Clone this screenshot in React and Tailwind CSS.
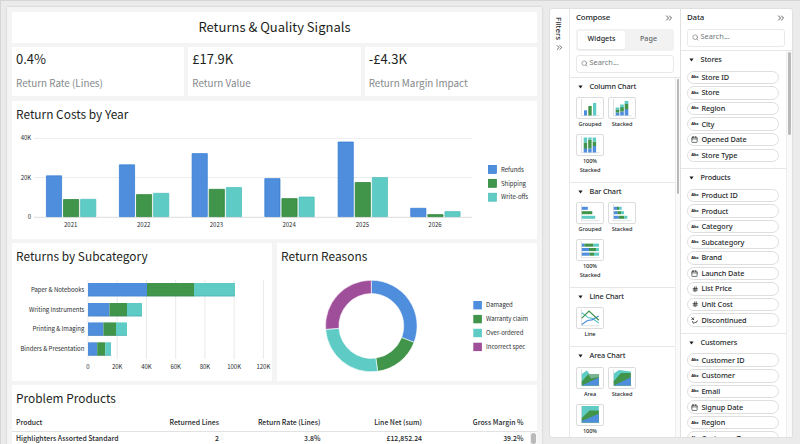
import React, { useState } from 'react';
import { ChevronsRight, Search, Calendar, Hash } from 'lucide-react';

const BLUE = '#4f8edc';
const GREEN = '#41954a';
const TEAL = '#5ecbc5';
const PURPLE = '#9f4f99';

const kpis = [
  { value: '0.4%', label: 'Return Rate (Lines)' },
  { value: '£17.9K', label: 'Return Value' },
  { value: '-£4.3K', label: 'Return Margin Impact' },
];

// x of the group, then the top of each bar
const years = [
  { year: '2021', x: 46, tops: [175.5, 199.2, 199] },
  { year: '2022', x: 119, tops: [164.5, 194.3, 193] },
  { year: '2023', x: 191.7, tops: [153.3, 189, 187.2] },
  { year: '2024', x: 264.4, tops: [178.3, 198.3, 196.7] },
  { year: '2025', x: 337.7, tops: [141.7, 182.2, 177.3] },
  { year: '2026', x: 410.3, tops: [208, 214.3, 211.3] },
];
const barColors = [BLUE, GREEN, TEAL];
const barStrokes = ['#2f78d2', '#258032', '#4bbdb8'];

const subcategories = [
  { name: 'Paper & Notebooks', y: 283, stops: [88, 147, 194, 235] },
  { name: 'Writing Instruments', y: 303, stops: [88, 109.5, 127, 142] },
  { name: 'Printing & Imaging', y: 322.4, stops: [88, 103.4, 116, 127] },
  { name: 'Binders & Presentation', y: 342.3, stops: [88, 97.2, 105.2, 111] },
];
const ticks = ['0', '20K', '40K', '60K', '80K', '100K', '120K'];

const reasons = [
  { name: 'Damaged', from: 0, to: 110.9, color: BLUE },
  { name: 'Warranty claim', from: 110.9, to: 172, color: GREEN },
  { name: 'Over-ordered', from: 172, to: 265.8, color: TEAL },
  { name: 'Incorrect spec', from: 265.8, to: 360, color: PURPLE },
];

const fieldGroups = [
  {
    name: 'Stores',
    fields: [['abc', 'Store ID'], ['abc', 'Store'], ['abc', 'Region'], ['abc', 'City'], ['date', 'Opened Date'], ['abc', 'Store Type']],
  },
  {
    name: 'Products',
    fields: [['abc', 'Product ID'], ['abc', 'Product'], ['abc', 'Category'], ['abc', 'Subcategory'], ['abc', 'Brand'], ['date', 'Launch Date'], ['num', 'List Price'], ['num', 'Unit Cost'], ['bool', 'Discontinued']],
  },
  {
    name: 'Customers',
    fields: [['abc', 'Customer ID'], ['abc', 'Customer'], ['abc', 'Email'], ['date', 'Signup Date'], ['abc', 'Region'], ['abc', 'Customer Type']],
  },
];

function Card({ className = '', children }) {
  return <section className={`bg-white ${className}`}>{children}</section>;
}

function CardTitle({ children }) {
  return <h2 className="pb-[1px] pl-[4px] pt-[3px] text-[11.9px] leading-[20px] text-[#1c1f21]">{children}</h2>;
}

function ReturnCosts() {
  return (
    <svg className="block" width="525" height="114" viewBox="12 125 525 114" fontSize="6" fill="#2a2d30">
      <path d="M34 138.4H472M34 177.5H472" stroke="#ededed" />
      <path d="M34 217.3H472" stroke="#dcdcdc" />
      {['40K', '20K', '0'].map((t, i) => (
        <text key={t} x="31.2" y={[140.3, 179.5, 219][i]} textAnchor="end">{t}</text>
      ))}
      {years.map(({ year, x, tops }) => (
        <g key={year}>
          {tops.map((top, i) => (
            <path
              key={i}
              d={`M${x + 0.4 + i * 17.1} 216.6V${top + 0.3}h15.2V216.6z`}
              fill={barColors[i]}
              stroke={barStrokes[i]}
              strokeWidth="0.7"
            />
          ))}
          <text x={x + 24.7} y="227" textAnchor="middle">{year}</text>
        </g>
      ))}
      {['Refunds', 'Shipping', 'Write-offs'].map((t, i) => (
        <g key={t}>
          <rect x="488.4" y={165.4 + i * 13.9} width="8" height="8" fill={barColors[i]} stroke={barStrokes[i]} strokeWidth="0.7" />
          <text x="501" y={171.6 + i * 13.9}>{t}</text>
        </g>
      ))}
    </svg>
  );
}

function SubcategoryBars() {
  return (
    <svg className="block" width="260" height="114" viewBox="12 267 260 114" fontSize="6" fill="#2a2d30">
      {ticks.map((t, i) => (
        <g key={t}>
          <path d={`M${88 + i * 29.23} 280V359`} stroke="#e9e9e9" />
          <text x={88 + i * 29.23} y="369.2" textAnchor="middle">{t}</text>
        </g>
      ))}
      {subcategories.map(({ name, y, stops }) => (
        <g key={name}>
          <text x="84.4" y={y + 8.6} textAnchor="end">{name}</text>
          {barColors.map((c, i) => (
            <rect key={c} x={stops[i]} y={y} width={stops[i + 1] - stops[i]} height="13.4" fill={c} />
          ))}
          <path d={`M88 ${y + 13}H${stops[3]}`} stroke="#1f5f80" strokeOpacity="0.25" strokeWidth="0.8" />
        </g>
      ))}
    </svg>
  );
}

function point(r, deg) {
  const a = (deg * Math.PI) / 180;
  return `${(371.3 + r * Math.sin(a)).toFixed(2)} ${(326 - r * Math.cos(a)).toFixed(2)}`;
}

function ReasonsDonut() {
  return (
    <svg className="block" width="260" height="114" viewBox="277 267 260 114" fontSize="6" fill="#2a2d30">
      {reasons.map(({ name, from, to, color }, i) => (
        <g key={name}>
          <path
            d={`M${point(45.8, from)}A45.8 45.8 0 0 1 ${point(45.8, to)}L${point(32.4, to)}A32.4 32.4 0 0 0 ${point(32.4, from)}z`}
            fill={color}
            stroke="#fff"
            strokeWidth="0.6"
          />
          <rect x="473.3" y={301 + i * 13.9} width="8.6" height="8.4" fill={color} />
          <text x="486" y={307 + i * 13.9}>{name}</text>
        </g>
      ))}
    </svg>
  );
}

function ProblemProducts() {
  const head = ['Returned Lines', 'Return Rate (Lines)', 'Line Net (sum)', 'Gross Margin %'];
  const row = ['2', '3.8%', '£12,852.24', '39.2%'];
  return (
    <div className="text-[6.9px] font-medium text-[#24282b]">
      <div className="mt-[7px] grid h-[16px] grid-cols-[101.5px_101.5px_101.5px_101.5px_101.5px] border-b border-[#e2e2e2] pl-[4px] leading-[13px]">
        <span>Product</span>
        {head.map((h) => <span key={h} className="whitespace-nowrap text-right">{h}</span>)}
      </div>
      <div className="flex h-[12px]">
        <div className="grid w-[517.5px] grid-cols-[101.5px_101.5px_101.5px_101.5px_101.5px] pl-[4px] leading-[12px]">
          <span className="whitespace-nowrap">Highlighters Assorted Standard</span>
          {row.map((c) => <span key={c} className="text-right">{c}</span>)}
        </div>
        <div className="flex-1 border-l border-[#eee] bg-[#fafafa] px-[0.7px] pt-[1px]">
          <div className="h-[10.5px] rounded-full bg-[#b9b9b9]" />
        </div>
      </div>
    </div>
  );
}

function SearchBox({ className = '' }) {
  return (
    <div className={`flex h-[18px] items-center gap-[2px] rounded-[3px] border border-[#e9e9e9] pb-[1px] pl-[3.5px] text-[7.4px] text-[#75797c] ${className}`}>
      <Search size={7} strokeWidth={2.2} />
      <span>Search...</span>
    </div>
  );
}

function SectionHeader({ children }) {
  return (
    <div className="flex h-[19.6px] items-center pb-[2.6px] pl-[7.5px] text-[7.3px] font-medium tracking-[-0.13px]">
      <svg className="mt-[1px]" width="5" height="4" viewBox="0 0 5 4"><path d="M.4.4h4.2L2.5 3.6z" fill="#1c1f21" /></svg>
      <span className="ml-[7px]">{children}</span>
    </div>
  );
}

const axes = <path d="M5.5 2V18.7H23.5" fill="none" stroke="#c9cdd0" strokeWidth="0.6" />;

function Blocks({ items }) {
  return items.map(([x, y, w, h, fill], i) => <rect key={i} x={x} y={y} width={w} height={h} fill={fill} />);
}

const glyphs = {
  colGrouped: <>{axes}<Blocks items={[[8, 13.3, 3, 5.2, BLUE], [12.3, 9, 3.4, 9.5, GREEN], [17, 6, 3.2, 12.5, TEAL]]} /></>,
  colStacked: <>{axes}<Blocks items={[[7.7, 15.5, 3.6, 3, BLUE], [7.7, 12.5, 3.6, 3, GREEN], [7.7, 10.5, 3.6, 2.3, TEAL], [12.2, 14.5, 3.6, 4, BLUE], [12.2, 10, 3.6, 4.5, GREEN], [12.2, 7.5, 3.6, 2.8, TEAL], [16.7, 12, 3.6, 6.5, BLUE], [16.7, 6.5, 3.6, 5.7, GREEN], [16.7, 4, 3.6, 3, TEAL]]} /></>,
  colFull: <>{axes}<Blocks items={[[7.7, 14, 3.4, 4.5, BLUE], [7.7, 8.5, 3.4, 6, GREEN], [7.7, 3.5, 3.4, 5, TEAL], [12.2, 14.5, 3.4, 4, BLUE], [12.2, 5.5, 3.4, 9, GREEN], [12.2, 3.5, 3.4, 2, TEAL], [16.7, 11.5, 3.4, 7, BLUE], [16.7, 7.5, 3.4, 4.5, GREEN], [16.7, 3.5, 3.4, 4, TEAL]]} /></>,
  barGrouped: <>{axes}<Blocks items={[[5.8, 4.8, 6, 3, BLUE], [5.8, 9.2, 10.5, 3, GREEN], [5.8, 13.8, 13.4, 3, TEAL]]} /></>,
  barStacked: <>{axes}<Blocks items={[[5.8, 4.8, 4, 3, BLUE], [9, 4.8, 2.5, 3, GREEN], [11.3, 4.8, 2.4, 3, TEAL], [5.8, 9.2, 4, 3, BLUE], [9.5, 9.2, 3.7, 3, GREEN], [13, 9.2, 3, 3, TEAL], [5.8, 13.8, 5, 3, BLUE], [10.8, 13.8, 5.5, 3, GREEN], [16.3, 13.8, 3, 3, TEAL]]} /></>,
  barFull: <>{axes}<Blocks items={[[5.8, 4.6, 2.8, 3.1, BLUE], [8.5, 4.6, 9, 3.1, GREEN], [17.3, 4.6, 5.7, 3.1, TEAL], [5.8, 9, 7.2, 3.1, BLUE], [13, 9, 7, 3.1, GREEN], [20, 9, 3, 3.1, TEAL], [5.8, 13.6, 7.8, 3.1, BLUE], [13.5, 13.6, 4.5, 3.1, GREEN], [18, 13.6, 5, 3.1, TEAL]]} /></>,
  line: (
    <g fill="none" strokeWidth="1.2">
      {axes}
      <path d="M5.8 5.8 12 10.5 16 11.3 22.8 16" stroke={TEAL} />
      <path d="M5.8 17.6 11.5 13.5 16 12.8 22.8 9" stroke={BLUE} />
      <path d="M5.8 11.2 13 4 22.8 13.3" stroke={GREEN} />
    </g>
  ),
  area: (
    <g>
      {axes}
      <path d="M5.8 7 10.8 3.5 15.5 9.5 22.8 7.5V18.5H5.8z" fill={TEAL} />
      <path d="M5.8 14.5 12.5 7H22.8V18.5H5.8z" fill={GREEN} />
      <path d="M12 7 15 11.5 22.8 10V7z" fill="#7bb493" />
      <path d="M5.8 18.5 22.8 10.5V18.5z" fill={BLUE} />
    </g>
  ),
  areaStacked: (
    <g>
      {axes}
      <path d="M5.8 6.5 11 3 22.8 4.6V18.5H5.8z" fill={TEAL} />
      <path d="M5.8 14.3 13 6H22.8V18.5H5.8z" fill={GREEN} />
      <path d="M5.8 18.5 22.8 10.2V18.5z" fill={BLUE} />
    </g>
  ),
  areaFull: (
    <g>
      {axes}
      <path d="M5.8 2H22.8V18.5H5.8z" fill={TEAL} />
      <path d="M5.8 14 13.5 6.5H22.8V18.5H5.8z" fill={GREEN} />
      <path d="M5.8 18.5V17L22.8 9.8V18.5z" fill={BLUE} />
    </g>
  ),
};

const widgetGroups = [
  { name: 'Column Chart', items: [['colGrouped', 'Grouped'], ['colStacked', 'Stacked'], ['colFull', '100% Stacked']] },
  { name: 'Bar Chart', items: [['barGrouped', 'Grouped'], ['barStacked', 'Stacked'], ['barFull', '100% Stacked']] },
  { name: 'Line Chart', items: [['line', 'Line']] },
  { name: 'Area Chart', items: [['area', 'Area'], ['areaStacked', 'Stacked'], ['areaFull', '100% Stacked']] },
];

function Widget({ glyph, label }) {
  return (
    <div className="flex w-[28px] flex-col items-center">
      <div className="h-[22px] w-[28px] rounded-[2px] border border-[#dcdcdc] bg-white">
        <svg className="-ml-px -mt-px block" width="28" height="22" viewBox="0 0 28 22">{glyphs[glyph]}</svg>
      </div>
      <span className="mt-[1px] text-center text-[5.6px] font-medium leading-[9px] tracking-[-0.05px]">{label}</span>
    </div>
  );
}

function FieldIcon({ type }) {
  if (type === 'date') return <Calendar size={7} strokeWidth={2.2} />;
  if (type === 'num') return <Hash size={6.5} strokeWidth={2.6} />;
  if (type === 'bool') {
    return (
      <svg width="7" height="7" viewBox="0 0 14 14" fill="none" stroke="currentColor" strokeWidth="1.8">
        <path d="M1 1l5 5M6 1L1 6M3 8.5c0 2.5 1 4 3.5 4M6.5 9.5l2.5 2.5 4.5-5" />
      </svg>
    );
  }
  return <span className="text-[4.1px] font-extrabold">Abc</span>;
}

function PanelHeader({ children }) {
  return (
    <div className="flex h-[20px] items-center justify-between px-[6px] pb-[1.5px] text-[7.9px] font-medium tracking-[-0.2px]">
      <span>{children}</span>
      <ChevronsRight size={10} strokeWidth={1.8} />
    </div>
  );
}

export default function App() {
  const [tab, setTab] = useState('Widgets');

  return (
    <div className="flex h-[444px] w-[800px] overflow-hidden border-l border-t border-[#d6d6d6] bg-[#ebebeb] pl-[6px] pt-[6px] font-['Noto_Sans_CJK_JP','Noto_Sans',sans-serif]">
      {/* report canvas */}
      <main className="h-[440px] w-[535px] shrink-0 bg-[#f4f4f4] px-[5px] pt-[5px] shadow-[0_0_2px_rgba(0,0,0,0.18)]">
        <Card className="h-[31px] text-center text-[13px] leading-[29px] text-[#1c1f21]">Returns &amp; Quality Signals</Card>
        <div className="mt-[4px] grid h-[49px] grid-cols-3 gap-[4px]">
          {kpis.map(({ value, label }) => (
            <Card key={label} className="pl-[4px]">
              <div className="pt-[2px] text-[13px] leading-[20px] text-[#1c1f21]">{value}</div>
              <div className="pt-[5px] text-[9.85px] leading-[18px] text-[#85888a]">{label}</div>
            </Card>
          ))}
        </div>
        <Card className="mt-[5px] h-[138px]">
          <CardTitle>Return Costs by Year</CardTitle>
          <ReturnCosts />
        </Card>
        <div className="mt-[4px] flex h-[138px] gap-[5px]">
          <Card className="w-[260px]">
            <CardTitle>Returns by Subcategory</CardTitle>
            <SubcategoryBars />
          </Card>
          <Card className="w-[260px]">
            <CardTitle>Return Reasons</CardTitle>
            <ReasonsDonut />
          </Card>
        </div>
        <Card className="mt-[4px] h-[62px]">
          <CardTitle>Problem Products</CardTitle>
          <ProblemProducts />
        </Card>
      </main>

      {/* side panels */}
      <div className="ml-[6.5px] mt-[0.5px] flex h-[430px] w-[244px] shrink-0 overflow-hidden rounded-[3px] border border-[#e0e0e0] bg-white font-['Noto_Sans',sans-serif] text-[#24282b]">
        <div className="flex w-[20.5px] shrink-0 flex-col items-center border-r border-[#e6e6e6] pt-[8px]">
          <span className="text-[7.9px] font-medium leading-[10px] [writing-mode:vertical-rl]">Filters</span>
          <ChevronsRight className="mt-[3.5px]" size={9} strokeWidth={1.8} />
        </div>

        <div className="flex w-[111px] shrink-0 flex-col border-r border-[#e0e0e0]">
          <PanelHeader>Compose</PanelHeader>
          <div className="ml-[6px] flex h-[22px] w-[98px] shrink-0 rounded-[3px] bg-[#f2f2f2] p-[2px] text-[7.2px] font-medium">
            {['Widgets', 'Page'].map((t) => (
              <button key={t} onClick={() => setTab(t)} className={`flex-1 rounded-[2px] pb-[2px] ${tab === t ? 'bg-white shadow-xs' : 'text-[#65696c]'}`}>
                {t}
              </button>
            ))}
          </div>
          <SearchBox className="ml-[6px] mt-[4px] w-[98px] shrink-0" />
          <div className="mt-[4px] flex min-h-0 flex-1 border-t border-[#e6e6e6]">
            <div className="w-[105px] overflow-hidden">
              {widgetGroups.map(({ name, items }) => (
                <div key={name} className="border-b border-[#e6e6e6] pb-[6.6px]">
                  <SectionHeader>{name}</SectionHeader>
                  <div className="flex flex-wrap gap-x-[4px] gap-y-[5px] pl-[6px] pr-[36px]">
                    {items.map(([glyph, label]) => <Widget key={glyph} glyph={glyph} label={label} />)}
                  </div>
                </div>
              ))}
            </div>
            <div className="flex-1 border-l border-[#eee] bg-[#fafafa] px-[0.8px] pt-[1px]">
              <div className="h-[115px] rounded-full bg-[#b9b9b9]" />
            </div>
          </div>
        </div>

        <div className="flex flex-1 flex-col">
          <PanelHeader>Data</PanelHeader>
          <SearchBox className="ml-[6px] w-[98px] shrink-0" />
          <div className="mt-[3.5px] flex min-h-0 flex-1 border-t border-[#e6e6e6]">
            <div className="w-[105px] overflow-hidden">
              {fieldGroups.map(({ name, fields }) => (
                <div key={name} className="border-b border-[#e6e6e6] pb-[3.9px]">
                  <SectionHeader>{name}</SectionHeader>
                  {fields.map(([type, label]) => (
                    <div key={label} className="mb-[2.1px] ml-[6.4px] flex h-[13.5px] w-[92px] items-center rounded-full border border-[#dedede] text-[7.3px] font-medium tracking-[-0.08px]">
                      <span className="flex w-[13px] justify-center"><FieldIcon type={type} /></span>
                      <span>{label}</span>
                    </div>
                  ))}
                </div>
              ))}
            </div>
            <div className="flex-1 border-l border-[#eee] bg-[#fafafa] px-[0.8px] pt-[1px]">
              <div className="h-[83px] rounded-full bg-[#b9b9b9]" />
            </div>
          </div>
        </div>
      </div>
    </div>
  );
}
